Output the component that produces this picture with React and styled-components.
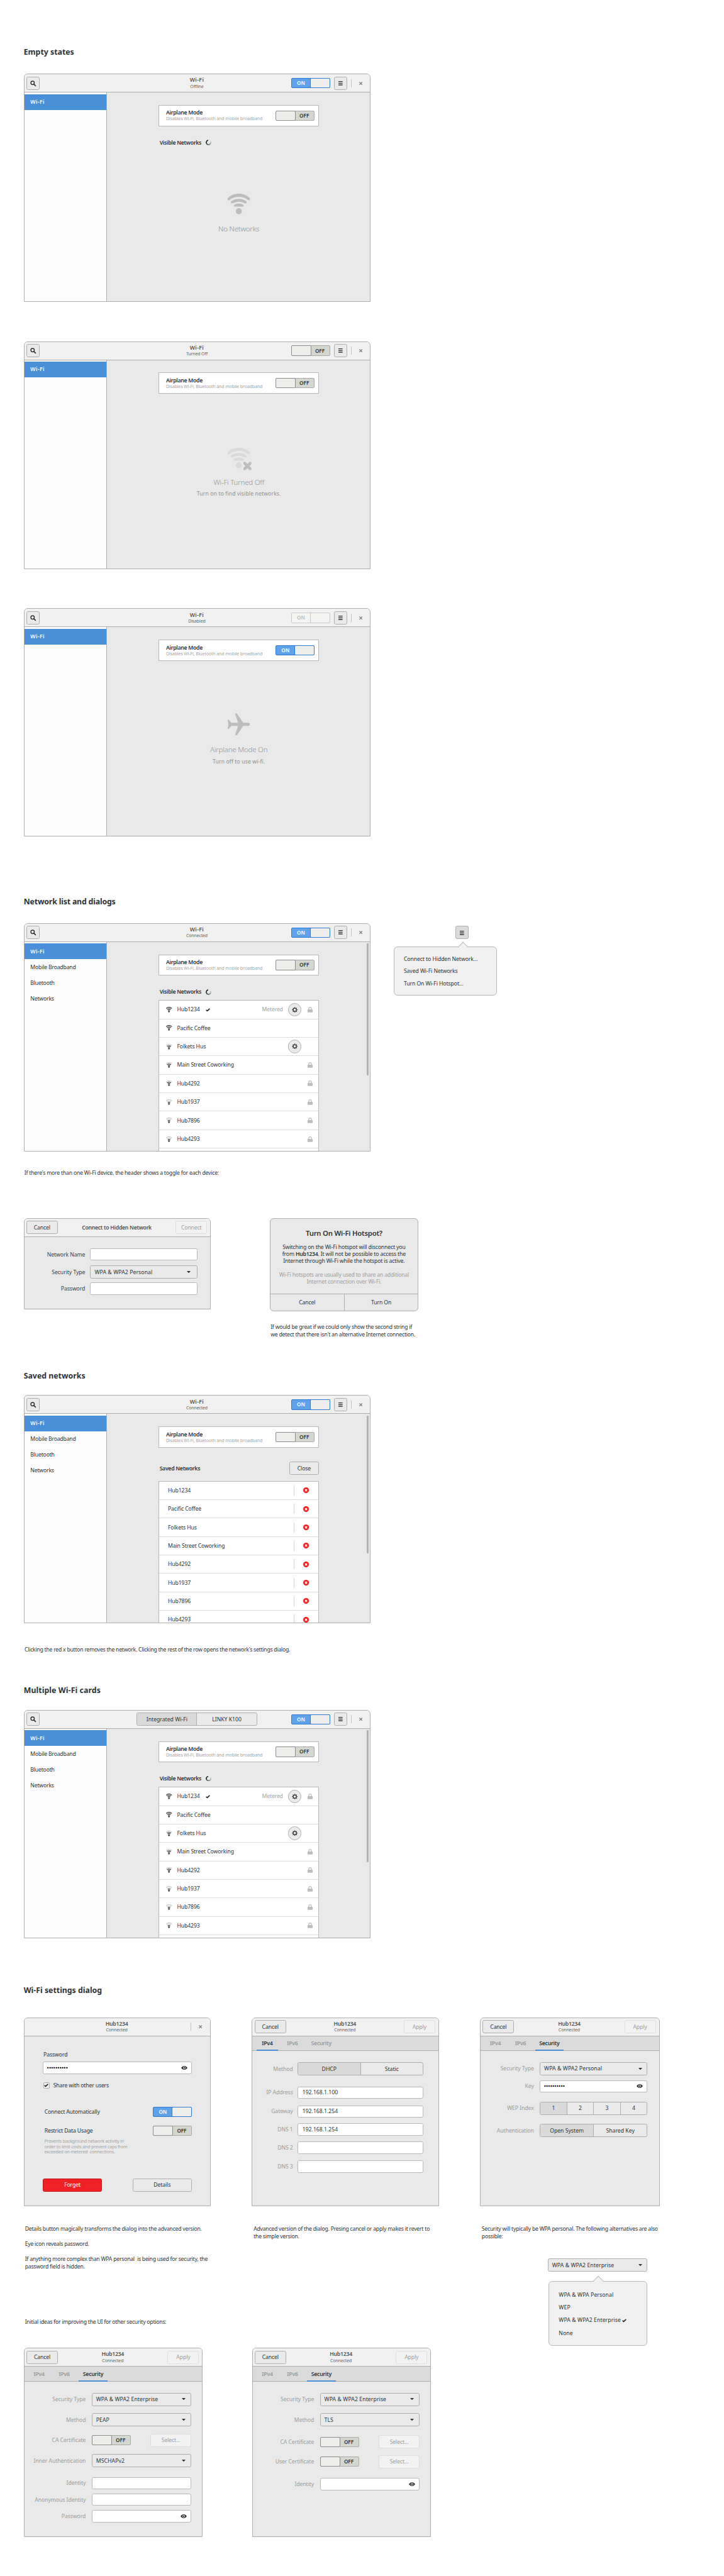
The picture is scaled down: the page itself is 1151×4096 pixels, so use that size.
import React from "react";
import styled, { createGlobalStyle, css } from "styled-components";

/* 1rem = 10 design units */
const GlobalStyle = createGlobalStyle`
  html { font-size: 6.67px; }
  body { margin: 0; background: #fff; }
  *, *::before, *::after { box-sizing: border-box; }
  #root {
    font-family: "Noto Sans", "Open Sans", sans-serif;
    font-size: 1.3rem;
    line-height: 1.8rem;
    color: #2e3436;
    white-space: nowrap;
  }
`;

const line = "#aeaeae";

/* ---------- board ---------- */

const Board = styled.main`
  width: 172.5rem;
  height: 614.1rem;
  max-width: 100vw;
  max-height: 4096px;
  overflow: hidden;
  padding: 11.17rem 0 0 5.65rem;
`;
const Section = styled.section`
  height: ${(p) => p.$height}rem;
`;
const Heading = styled.h2`
  margin: 0;
  font-size: 1.85rem;
  line-height: 2.4rem;
  font-weight: 700;
  letter-spacing: ${(p) => p.$track || 0}em;
`;
const Row = styled.div`
  display: flex;
  align-items: flex-start;
  margin-top: ${(p) => p.$top || 0}rem;
  gap: ${(p) => p.$gap || 0}rem;
`;
const Column = styled.div`
  display: flex;
  flex-direction: column;
  align-items: flex-start;
  flex: none;
  width: ${(p) => p.$width}rem;
`;
const Note = styled.p`
  margin: ${(p) => p.$top || 0}rem 0 0 ${(p) => p.$left || 0.3}rem;
  letter-spacing: ${(p) => p.$track || -0.027}em;
`;

/* ---------- basic controls ---------- */

const Button = styled.button`
  display: flex;
  align-items: center;
  justify-content: center;
  flex: none;
  width: ${(p) => p.$width}rem;
  height: 3.15rem;
  padding: 0;
  border: 1px solid ${line};
  border-radius: 0.4rem;
  background: #eaeaea;
  color: #2e3436;
  font: inherit;
  letter-spacing: -0.015em;
  ${(p) => p.$pressed && css`background: #dbdbdb;`}
  ${(p) => p.$red && css`
    background: #ef2124;
    border-color: #c01518;
    color: #fff;
  `}
  &:disabled {
    background: #f2f2f2;
    border-color: #dedede;
    color: #9c9e9e;
  }
`;
const SwitchBox = styled.div`
  display: flex;
  flex-direction: ${(p) => (p.$on ? "row" : "row-reverse")};
  flex: none;
  width: 9.3rem;
  height: 2.45rem;
  border: 1px solid ${(p) => (p.$muted ? "#c9c9c9" : p.$on ? "#2f7cd0" : "#a9aba6")};
  border-radius: 0.3rem;
  background: ${(p) => (p.$muted ? "#f4f4f3" : p.$on ? "#5ea2ec" : "#d4d7cf")};
  color: ${(p) => (p.$muted ? "#bcbdbc" : p.$on ? "#fff" : "#2e3436")};
`;
const SwitchLabel = styled.span`
  display: flex;
  align-items: center;
  justify-content: center;
  flex: 1;
  font-size: 1.23rem;
  font-weight: 600;
`;
const Slider = styled.span`
  flex: 1;
  margin: -1px;
  border: 1px solid ${(p) => (p.$muted ? "#c9c9c9" : p.$on ? "#2f7cd0" : "#8b8e8b")};
  border-radius: 0.3rem;
  background: ${(p) => (p.$muted ? "#f3f3f1" : "#ededeb")};
`;
const Switch = ({ on, muted }) => (
  <SwitchBox $on={on} $muted={muted}>
    <SwitchLabel>{on ? "ON" : "OFF"}</SwitchLabel>
    <Slider $on={on} $muted={muted} />
  </SwitchBox>
);
const Segments = styled.div`
  display: flex;
  flex: none;
  width: ${(p) => p.$width}rem;
  height: 3.15rem;
  border: 1px solid ${line};
  border-radius: 0.4rem;
  overflow: hidden;
  background: #eaeaea;
`;
const Segment = styled.span`
  display: flex;
  align-items: center;
  justify-content: center;
  flex: 1;
  background: ${(p) => (p.$active ? "#dadada" : "transparent")};
  & + & { border-left: 1px solid ${line}; }
`;
const Toggle = ({ items, width }) => (
  <Segments $width={width}>
    {items.map((t, i) => (
      <Segment key={t} $active={i === 0}>{t}</Segment>
    ))}
  </Segments>
);
const Entry = styled.div`
  display: flex;
  align-items: center;
  justify-content: space-between;
  flex: none;
  width: ${(p) => p.$width}rem;
  height: 2.95rem;
  padding: 0 0.9rem 0 1rem;
  border: 1px solid #b9b9b9;
  border-radius: 0.4rem;
  background: #fff;
`;
const Dots = styled.span`
  font-size: 1.45rem;
  color: #000;
  letter-spacing: -0.03em;
  margin-left: -0.2rem;
`;
const ComboBox = styled(Entry)`
  height: 3.15rem;
  padding: 0 ${(p) => p.$pad || 1.15}rem 0 0.9rem;
  border-color: ${line};
  background: #eaeaea;
  letter-spacing: 0.01em;
`;
const Combo = ({ value, width, pad }) => (
  <ComboBox $width={width} $pad={pad}>
    {value}
    <ArrowIcon viewBox="0 0 9 5"><path d="M0 0H9L4.5 5Z" fill="currentColor" /></ArrowIcon>
  </ComboBox>
);

/* ---------- icons ---------- */

const Icon = styled.svg`
  display: block;
  flex: none;
  width: ${(p) => p.$w}rem;
  height: ${(p) => p.$h || p.$w}rem;
  overflow: visible;
`;
const ArrowIcon = styled(Icon)`
  width: 0.9rem;
  height: 0.5rem;
`;
const SearchIcon = () => (
  <Icon $w={1.4} viewBox="0 0 14 14" fill="none" stroke="currentColor">
    <circle cx="5.7" cy="5.6" r="4.1" strokeWidth="2.2" />
    <path d="M8.8 8.8L12.6 12.6" strokeWidth="2.6" strokeLinecap="round" />
  </Icon>
);
const MenuIcon = () => (
  <Icon $w={1} viewBox="0 0 10 10" stroke="currentColor" strokeWidth="2">
    <path d="M0 1H10M0 5H10M0 9H10" />
  </Icon>
);
const CloseIcon = () => (
  <Icon $w={0.8} viewBox="0 0 8 8" stroke="#7d7f7f" strokeWidth="2">
    <path d="M.7 .7L7.3 7.3M7.3 .7L.7 7.3" />
  </Icon>
);
const CheckIcon = () => (
  <Icon $w={1.05} $h={0.8} viewBox="0 0 21 16" fill="none" stroke="#1f2426" strokeWidth="5">
    <path d="M2 8.5L7.5 13L19 2.5" />
  </Icon>
);
const GearIcon = () => (
  <Icon $w={1.4} viewBox="-7 -7 14 14" fill="none" stroke="#2e3436">
    <circle r="3.8" strokeWidth="1.9" />
    {[0, 45, 90, 135, 180, 225, 270, 315].map((a) => (
      <path key={a} d="M0 -4.3V-6.6" strokeWidth="1.8" transform={`rotate(${a})`} />
    ))}
  </Icon>
);
const LockIcon = () => (
  <Icon $w={1.2} $h={1.3} viewBox="0 0 12 13">
    <path d="M2.9 7V4A3.1 3.1 0 0 1 9.1 4V7" fill="none" stroke="#bdbdbd" strokeWidth="1.9" />
    <rect y="6" width="12" height="7" rx=".8" fill="#bdbdbd" />
  </Icon>
);
const EyeIcon = () => (
  <Icon $w={1.5} $h={0.9} viewBox="0 0 30 18">
    <path d="M0 9C4 3 9 0 15 0S26 3 30 9C26 15 21 18 15 18S4 15 0 9Z" fill="#2e3436" />
    <circle cx="15" cy="9" r="5" fill="none" stroke="#fff" strokeWidth="2.4" />
  </Icon>
);
const RemoveIcon = () => (
  <Icon $w={1.37} viewBox="0 0 14 14">
    <circle cx="7" cy="7" r="7" fill="#ef2124" />
    <path d="M4.6 4.6L9.4 9.4M9.4 4.6L4.6 9.4" stroke="#fff" strokeWidth="2.2" />
  </Icon>
);
const arcs = [
  "M0 15.2V10.6C7 3.6 16 0 26.4 0S45.8 3.6 52.8 10.6V15.2H48.6C42 10 35 7.6 26.4 7.6S10.8 10 4.2 15.2Z",
  "M7.6 22.9V18.6C12.6 14.4 19 12.2 26.4 12.2S40.2 14.4 45.2 18.6V22.9H40.2C36.2 20.4 31.8 19 26.4 19S16.6 20.4 12.6 22.9Z",
  "M14.8 30.7V26.9C18 24.4 22 23.1 26.4 23.1S34.8 24.4 38 26.9V30.7Z",
];
/* level 3 lights every arc, each step down fades the outermost lit arc */
const WifiIcon = ({ size = 1.4, level = 3, color = "#2e3436", faded = "#c6c7c7", off }) => (
  <Icon $w={size} $h={size * 0.93} viewBox="0 0 52.8 49">
    {arcs.map((d, i) => (
      <path key={i} d={d} fill={3 - i <= level ? color : faded} />
    ))}
    <ellipse cx="26.4" cy="41.7" rx="7.2" ry="7.3" fill={color} />
    {off && (
      <path
        d="M37.5 33.5H42.5L47 38.5L51.5 33.5H56.5V38.5L51.8 43.3L56.5 48V53H51.5L47 48.3L42.5 53H37.5V48L42.2 43.3L37.5 38.5Z"
        fill="#bdbdbd"
      />
    )}
  </Icon>
);
const PlaneIcon = () => (
  <Icon $w={5.3} viewBox="0 0 53 53">
    <path
      d="M17.5 1.5C18 0 21.5-.4 22.8 1.8L37 22.8H48.5C54.5 22.8 54.5 30.2 48.5 30.2H37L22.8 51.2C21.5 53.4 18 53 17.5 51.5L25 30.2H8.5L3.5 36.5C2.6 38 .2 38 0 36.8L1.6 26.5L0 16.2C.2 15 2.6 15 3.5 16.5L8.5 22.8H25Z"
      fill="#bdbdbd"
    />
  </Icon>
);
const Spinner = styled.span`
  width: 1.3rem;
  height: 1.3rem;
  border-radius: 50%;
  background: conic-gradient(transparent 50deg, rgba(46, 52, 54, 0.15) 70deg, #2e3436 270deg, #2e3436 360deg, transparent 361deg);
  mask: radial-gradient(circle, transparent 0.37rem, #000 0.4rem);
`;

/* ---------- window chrome ---------- */

const Frame = styled.div`
  display: flex;
  flex-direction: column;
  flex: none;
  width: ${(p) => p.$width || 82.65}rem;
  height: ${(p) => p.$height || 54.4}rem;
  margin-top: ${(p) => p.$top || 0}rem;
  border: 1px solid ${line};
  border-radius: ${(p) => (p.$round ? "0.9rem" : "0.9rem 0.9rem 0 0")};
  background: #e9e9e9;
  overflow: hidden;
`;
const HeaderBar = styled.header`
  display: grid;
  grid-template-columns: 1fr auto 1fr;
  align-items: center;
  flex: none;
  height: calc(4.5rem - 1px);
  padding: 0 0.65rem 0 0.55rem;
  border-bottom: 1px solid ${line};
  background: #f1f1f1;
`;
const Titles = styled.div`
  display: flex;
  flex-direction: column;
  align-items: center;
  padding-top: 0.15rem;
  line-height: 1.55rem;
  color: #505354;
`;
const Title = styled.strong`
  font-weight: 600;
  letter-spacing: ${(p) => p.$track || 0}em;
`;
const Subtitle = styled.span`
  font-size: 1.05rem;
  letter-spacing: -0.02em;
  color: #66696a;
`;
const HeaderEnd = styled.div`
  display: flex;
  align-items: center;
  justify-content: flex-end;
`;
const Separator = styled.span`
  width: 1px;
  height: 2rem;
  background: #c0c0c0;
`;
const MenuSlot = styled.div`
  margin: 0 0.86rem 0 1rem;
`;
const CloseSlot = styled.div`
  padding: 0 1.15rem 0 1.75rem;
`;
const WindowBody = styled.div`
  display: flex;
  flex: 1;
  min-height: 0;
`;
const Sidebar = styled.nav`
  flex: none;
  width: calc(19.85rem - 1px);
  padding-top: 0.35rem;
  border-right: 1px solid ${line};
  background: #fbfbfb;
`;
const SidebarItem = styled.div`
  display: flex;
  align-items: center;
  height: 3.75rem;
  padding-left: 1.45rem;
  letter-spacing: -0.022em;
  ${(p) => p.$selected && css`
    background: #4a90d9;
    color: #fff;
    font-weight: 600;
    letter-spacing: 0.045em;
  `}
`;
const Content = styled.div`
  flex: none;
  width: 38.2rem;
  margin-left: 12.33rem;
  padding-top: 2.98rem;
`;
const Scroll = styled.span`
  width: 0.45rem;
  height: ${(p) => p.$height}rem;
  margin: 0.4rem 0.3rem 0 auto;
  border-radius: 0.2rem;
  background: #b1b1b1;
`;
const Card = styled.div`
  display: flex;
  align-items: center;
  justify-content: space-between;
  height: 5.04rem;
  padding: 0 0.95rem 0 1.6rem;
  border: 1px solid #b9b9b9;
  background: #fff;
`;
const CardText = styled.div`
  display: flex;
  flex-direction: column;
  line-height: 1.5rem;
  padding-top: 0.15rem;
`;
const Strong = styled.strong`
  font-weight: 600;
  letter-spacing: -0.032em;
`;
const Dim = styled.span`
  font-size: 1.05rem;
  letter-spacing: -0.017em;
  color: #a3a5a5;
`;
const ListHeader = styled.div`
  display: flex;
  align-items: center;
  gap: 1.1rem;
  height: ${(p) => (p.$tall ? 3.15 : 1.8)}rem;
  margin: ${(p) => (p.$tall ? "3.39rem 0 1.38rem" : "3rem 0 1.06rem")};
  padding-left: 0.2rem;
  ${(p) => p.$tall && css`justify-content: space-between;`}
`;
const List = styled.div`
  border: 1px solid #b9b9b9;
  border-bottom: 0;
  background: #fff;
`;
const ListRow = styled.div`
  display: flex;
  align-items: center;
  height: 4.4rem;
  padding: 0 1.4rem 0 ${(p) => (p.$saved ? 2.05 : 1.6)}rem;
  border-bottom: 1px solid #dededb;
  letter-spacing: -0.012em;
`;
const NetworkName = styled.span`
  padding: 0 1.35rem 0 ${(p) => (p.$saved ? 0 : 1.22)}rem;
`;
const RowEnd = styled.div`
  display: flex;
  align-items: center;
  margin-left: auto;
`;
const Metered = styled.span`
  margin-right: 1.2rem;
  color: #a3a5a5;
  letter-spacing: -0.02em;
`;
const GearButton = styled(Button)`
  width: 3.2rem;
  height: 3.2rem;
  border-radius: 50%;
`;
const LockSlot = styled.div`
  width: 1.2rem;
  margin-left: 1.45rem;
`;
const RemoveSlot = styled.div`
  display: flex;
  align-items: center;
  gap: 2.1rem;
  margin: 0 0.8rem 0 auto;
`;
const RowDivider = styled.span`
  width: 1px;
  height: 2.4rem;
  background: #d3d3d3;
`;

const SettingsWindow = ({ top, status, on, muted, devices, pages, airplane, scroll, children }) => (
  <Frame $top={top}>
    <HeaderBar>
      <div><Button $width={3.15}><SearchIcon /></Button></div>
      {devices ? (
        <Toggle items={devices} width={28.7} />
      ) : (
        <Titles><Title $track={0.045}>Wi-Fi</Title><Subtitle>{status}</Subtitle></Titles>
      )}
      <HeaderEnd>
        <Switch on={on} muted={muted} />
        <MenuSlot><Button $width={3.15}><MenuIcon /></Button></MenuSlot>
        <Separator />
        <CloseSlot><CloseIcon /></CloseSlot>
      </HeaderEnd>
    </HeaderBar>
    <WindowBody>
      <Sidebar>
        <SidebarItem $selected>Wi-Fi</SidebarItem>
        {pages && pages.map((p) => <SidebarItem key={p}>{p}</SidebarItem>)}
      </Sidebar>
      <Content>
        <Card>
          <CardText>
            <Strong>Airplane Mode</Strong>
            <Dim>Disables Wi-Fi, Bluetooth and mobile broadband</Dim>
          </CardText>
          <Switch on={airplane} />
        </Card>
        {children}
      </Content>
      {scroll && <Scroll $height={scroll} />}
    </WindowBody>
  </Frame>
);

const VisibleHeader = () => (
  <ListHeader><Strong>Visible Networks</Strong><Spinner /></ListHeader>
);

const Empty = styled.div`
  display: flex;
  flex-direction: column;
  align-items: center;
  padding-top: ${(p) => p.$top}rem;
`;
const EmptyIcon = styled.div`
  height: 5.3rem;
`;
const EmptyTitle = styled.div`
  margin: ${(p) => p.$top || 1.8}rem 0 0.68rem;
  font-size: 1.72rem;
  line-height: 2.4rem;
  font-weight: 300;
  letter-spacing: -0.018em;
  color: #919494;
`;
const EmptyHint = styled.div`
  color: #8f9292;
  letter-spacing: 0.012em;
`;

const pages = ["Mobile Broadband", "Bluetooth", "Networks"];
const networks = [
  { name: "Hub1234", level: 3, current: true, gear: true, lock: true },
  { name: "Pacific Coffee", level: 3 },
  { name: "Folkets Hus", level: 2, gear: true },
  { name: "Main Street Coworking", level: 2, lock: true },
  { name: "Hub4292", level: 2, lock: true },
  { name: "Hub1937", level: 1, lock: true },
  { name: "Hub7896", level: 1, lock: true },
  { name: "Hub4293", level: 1, lock: true },
];

const NetworkList = () => (
  <List>
    {networks.map((n) => (
      <ListRow key={n.name}>
        <WifiIcon level={n.level} />
        <NetworkName>{n.name}</NetworkName>
        {n.current && <CheckIcon />}
        <RowEnd>
          {n.current && <Metered>Metered</Metered>}
          {n.gear && <GearButton><GearIcon /></GearButton>}
          <LockSlot>{n.lock && <LockIcon />}</LockSlot>
        </RowEnd>
      </ListRow>
    ))}
    <ListRow />
  </List>
);
const SavedList = () => (
  <List>
    {networks.map((n) => (
      <ListRow key={n.name} $saved>
        <NetworkName $saved>{n.name}</NetworkName>
        <RemoveSlot><RowDivider /><RemoveIcon /></RemoveSlot>
      </ListRow>
    ))}
  </List>
);

/* ---------- popovers ---------- */

const MenuAnchor = styled.div`
  margin: 0.7rem 0 0 14.8rem;
`;
const Popover = styled.div`
  position: relative;
  width: ${(p) => p.$width}rem;
  height: ${(p) => p.$height}rem;
  margin-top: ${(p) => p.$top}rem;
  padding: ${(p) => p.$pad}rem 0 0 2.3rem;
  border: 1px solid #b9b9b9;
  border-radius: 0.9rem;
  background: #f1f1f1;
  letter-spacing: ${(p) => p.$track}em;
  &::before {
    content: "";
    position: absolute;
    top: -0.95rem;
    left: calc(${(p) => p.$arrow}rem - 0.92rem);
    width: 1.84rem;
    height: 1.84rem;
    border: solid #b9b9b9;
    border-width: 1px 0 0 1px;
    background: linear-gradient(135deg, #f1f1f1 50%, transparent 50%);
    transform: rotate(45deg);
  }
`;
const PopoverItem = styled.div`
  display: flex;
  align-items: center;
  gap: 0.25rem;
  height: ${(p) => p.$height}rem;
`;

/* ---------- dialogs ---------- */

const DialogHeader = styled(HeaderBar)`
  padding: 0 0.75rem 0 0.5rem;
`;
const TabBar = styled.div`
  display: flex;
  flex: none;
  height: 3.5rem;
  padding-left: 0.97rem;
  border-bottom: 1px solid ${line};
  background: #dbdbdb;
`;
const Tab = styled.span`
  display: flex;
  align-items: center;
  justify-content: center;
  width: ${(p) => p.$width}rem;
  margin-right: 0.9rem;
  margin-bottom: -1px;
  border-top: 0.3rem solid transparent;
  border-bottom: 0.3rem solid ${(p) => (p.$active ? "#4a90d9" : "transparent")};
  font-weight: 600;
  letter-spacing: -0.025em;
  color: ${(p) => (p.$active ? "#2e3436" : "#989a9a")};
`;
const Tabs = ({ active }) => (
  <TabBar>
    {[["IPv4", 5.1], ["IPv6", 5.1], ["Security", 6.85]].map(([t, w]) => (
      <Tab key={t} $width={w} $active={t === active}>{t}</Tab>
    ))}
  </TabBar>
);
const FieldRow = styled.div`
  display: flex;
  align-items: center;
  height: ${(p) => p.$height || 3.15}rem;
  margin-top: ${(p) => p.$top}rem;
`;
const FieldLabel = styled.span`
  flex: none;
  width: ${(p) => p.$width}rem;
  padding-right: ${(p) => p.$gap}rem;
  text-align: right;
  letter-spacing: -0.008em;
  color: ${(p) => (p.$dark ? "#3c4143" : "#9a9d9d")};
`;
const Field = ({ label, width, gap = 1.4, dark, top, height, children }) => (
  <FieldRow $top={top} $height={height}>
    <FieldLabel $width={width} $gap={gap} $dark={dark}>{label}</FieldLabel>
    {children}
  </FieldRow>
);
const HubTitles = () => (
  <Titles><Title $track={-0.028}>Hub1234</Title><Subtitle>Connected</Subtitle></Titles>
);
const AdvancedDialog = ({ width, tab, children }) => (
  <Frame $width={width} $height={45.05}>
    <DialogHeader>
      <div><Button $width={7.5}>Cancel</Button></div>
      <HubTitles />
      <HeaderEnd><Button $width={7.5} disabled>Apply</Button></HeaderEnd>
    </DialogHeader>
    <Tabs active={tab} />
    {children}
  </Frame>
);
const SelectButton = styled(Button)`
  width: 9.7rem;
  margin-left: 4.75rem;
`;

const AlertBody = styled.div`
  display: flex;
  flex-direction: column;
  align-items: center;
  flex: 1;
  text-align: center;
  line-height: 1.635rem;
  letter-spacing: -0.017em;
`;
const AlertTitle = styled.strong`
  margin: 2.3rem 0 1.4rem;
  font-size: 1.7rem;
  line-height: 2.4rem;
  font-weight: 600;
  letter-spacing: -0.02em;
`;
const AlertText = styled.div``;
const AlertHint = styled.div`
  margin-top: 1.65rem;
  letter-spacing: -0.023em;
  color: #a0a2a2;
`;
const AlertActions = styled.div`
  display: grid;
  grid-template-columns: 1fr 1fr;
  height: 4.05rem;
  border-top: 1px solid ${line};
`;
const AlertAction = styled.span`
  display: flex;
  align-items: center;
  justify-content: center;
  letter-spacing: -0.015em;
  & + & { border-left: 1px solid ${line}; }
`;

const SimpleForm = styled.div`
  display: flex;
  flex-direction: column;
  padding: 3.55rem 4.4rem 0;
`;
const PlainLabel = styled.span`
  padding-left: 0.15rem;
  letter-spacing: -0.008em;
`;
const CheckRow = styled.div`
  display: flex;
  align-items: center;
  gap: 0.9rem;
  height: 1.8rem;
  margin: 1.85rem 0 4.15rem 0.15rem;
  letter-spacing: -0.018em;
`;
const CheckBox = styled.span`
  display: flex;
  align-items: center;
  justify-content: center;
  width: 1.45rem;
  height: 1.4rem;
  border: 1px solid #b0b0b0;
  border-radius: 0.3rem;
  background: #f0f0f0;
`;
const SwitchRow = styled.div`
  display: flex;
  align-items: center;
  justify-content: space-between;
  height: 2.45rem;
  margin-bottom: ${(p) => p.$bottom || 0}rem;
  padding-left: 0.4rem;
  letter-spacing: -0.018em;
`;
const Hint = styled(Dim)`
  padding-left: 0.4rem;
  margin-top: 0.75rem;
  line-height: 1.31rem;
  letter-spacing: -0.02em;
`;
const ButtonRow = styled.div`
  display: flex;
  justify-content: space-between;
  margin-top: 5.5rem;
`;

const Picker = styled.div`
  margin: 4.4rem 0 0 16.14rem;
`;
const PickerMenu = styled(Popover)`
  margin-left: 0.2rem;
`;
const SecurityPicker = () => (
  <Picker>
    <Combo value="WPA & WPA2 Enterprise" width={23.8} />
    <PickerMenu $width={23.5} $height={15.45} $top={2.2} $pad={1.7} $arrow={11.65} $track={0.01}>
      <PopoverItem $height={3.02}>WPA & WPA Personal</PopoverItem>
      <PopoverItem $height={3.02}>WEP</PopoverItem>
      <PopoverItem $height={3.02}>WPA & WPA2 Enterprise<CheckIcon /></PopoverItem>
      <PopoverItem $height={3.02}>None</PopoverItem>
    </PickerMenu>
  </Picker>
);

export default function App() {
  return (
    <>
      <GlobalStyle />
      <Board>
        <Section $height={202.65}>
          <Heading>Empty states</Heading>
          <SettingsWindow top={4} status="Offline" on>
            <VisibleHeader />
            <Empty $top={10.22}>
              <EmptyIcon><WifiIcon size={5.28} color="#bdbdbd" /></EmptyIcon>
              <EmptyTitle $top={1.85}>No Networks</EmptyTitle>
            </Empty>
          </SettingsWindow>
          <SettingsWindow top={9.38} status="Turned Off">
            <Empty $top={12.81}>
              <EmptyIcon><WifiIcon size={5.28} color="#dadada" off /></EmptyIcon>
              <EmptyTitle>Wi-Fi Turned Off</EmptyTitle>
              <EmptyHint>Turn on to find visible networks.</EmptyHint>
            </Empty>
          </SettingsWindow>
          <SettingsWindow top={9.3} status="Disabled" on muted airplane>
            <Empty $top={12.5}>
              <EmptyIcon><PlaneIcon /></EmptyIcon>
              <EmptyTitle $top={2.2}>Airplane Mode On</EmptyTitle>
              <EmptyHint>Turn off to use wi-fi.</EmptyHint>
            </Empty>
          </SettingsWindow>
        </Section>

        <Section $height={113}>
          <Heading $track={-0.014}>Network list and dialogs</Heading>
          <Row $top={3.83} $gap={5.5}>
            <SettingsWindow status="Connected" on pages={pages} scroll={31.4}>
              <VisibleHeader />
              <NetworkList />
            </SettingsWindow>
            <Column $width={24.6}>
              <MenuAnchor><Button $width={3.15} $pressed><MenuIcon /></Button></MenuAnchor>
              <Popover $width={24.6} $height={11.65} $top={1.8} $pad={1.35} $arrow={16.35} $track={-0.01}>
                <PopoverItem $height={2.9}>Connect to Hidden Network...</PopoverItem>
                <PopoverItem $height={2.9}>Saved Wi-Fi Networks</PopoverItem>
                <PopoverItem $height={2.9}>Turn On Wi-Fi Hotspot...</PopoverItem>
              </Popover>
            </Column>
          </Row>
          <Note $top={4.19} $left={0.15} $track={-0.024}>
            If there's more than one Wi-Fi device, the header shows a toggle for each device:
          </Note>
          <Row $top={9.93} $gap={14}>
            <Frame $width={44.6} $height={21.8}>
              <DialogHeader>
                <div><Button $width={7.45}>Cancel</Button></div>
                <Titles><Strong>Connect to Hidden Network</Strong></Titles>
                <HeaderEnd><Button $width={7.45} disabled>Connect</Button></HeaderEnd>
              </DialogHeader>
              <Field label="Network Name" width={15.7} gap={1.2} dark top={2.7} height={2.95}>
                <Entry $width={25.65} />
              </Field>
              <Field label="Security Type" width={15.7} gap={1.2} dark top={1.15}>
                <Combo value="WPA & WPA2 Personal" width={25.65} pad={1.6} />
              </Field>
              <Field label="Password" width={15.7} gap={1.2} dark top={0.95} height={2.95}>
                <Entry $width={25.65} />
              </Field>
            </Frame>
            <Column $width={35.5}>
              <Frame $width={35.5} $height={22.3} $round>
                <AlertBody>
                  <AlertTitle>Turn On Wi-Fi Hotspot?</AlertTitle>
                  <AlertText>
                    Switching on the Wi-Fi hotspot will disconnect you<br />
                    from <Strong>Hub1234</Strong>. It will not be possible to access the<br />
                    Internet through Wi-Fi while the hotspot is active.
                  </AlertText>
                  <AlertHint>
                    Wi-Fi hotspots are usually used to share an additional<br />
                    Internet connection over Wi-Fi.
                  </AlertHint>
                </AlertBody>
                <AlertActions>
                  <AlertAction>Cancel</AlertAction>
                  <AlertAction>Turn On</AlertAction>
                </AlertActions>
              </Frame>
              <Note $top={2.8} $left={0.25}>
                If would be great if we could only show the second string if<br />
                we detect that there isn't an alternative Internet connection.
              </Note>
            </Column>
          </Row>
        </Section>

        <Section $height={75}>
          <Heading>Saved networks</Heading>
          <SettingsWindow top={3.37} status="Connected" on pages={pages} scroll={32.9}>
            <ListHeader $tall>
              <Strong>Saved Networks</Strong>
              <Button $width={7.1}>Close</Button>
            </ListHeader>
            <SavedList />
          </SettingsWindow>
          <Note $top={5.31} $left={0.2} $track={-0.029}>
            Clicking the red x button removes the network. Clicking the rest of the row opens the network's settings dialog.
          </Note>
        </Section>

        <Section $height={71.45}>
          <Heading $track={0.007}>Multiple Wi-Fi cards</Heading>
          <SettingsWindow
            top={3.38}
            devices={["Integrated Wi-Fi", "LINKY K100"]}
            on
            pages={pages}
            scroll={31.4}
          >
            <VisibleHeader />
            <NetworkList />
          </SettingsWindow>
        </Section>

        <Section $height={140}>
          <Heading>Wi-Fi settings dialog</Heading>
          <Row $top={5.23} $gap={9.78}>
            <Column $width={44.6}>
              <Frame $width={44.6} $height={45.05}>
                <DialogHeader>
                  <span />
                  <HubTitles />
                  <HeaderEnd><Separator /><CloseSlot><CloseIcon /></CloseSlot></HeaderEnd>
                </DialogHeader>
                <SimpleForm>
                  <PlainLabel>Password</PlainLabel>
                  <Row $top={0.7}>
                    <Entry $width={35.6}><Dots>••••••••••</Dots><EyeIcon /></Entry>
                  </Row>
                  <CheckRow>
                    <CheckBox><CheckIcon /></CheckBox>
                    Share with other users
                  </CheckRow>
                  <SwitchRow $bottom={2.05}>Connect Automatically<Switch on /></SwitchRow>
                  <SwitchRow>Restrict Data Usage<Switch /></SwitchRow>
                  <Hint>
                    Prevents background network activity in<br />
                    order to limit costs and prevent caps from<br />
                    exceeded on metered&nbsp; connections.
                  </Hint>
                  <ButtonRow>
                    <Button $width={14.1} $red>Forget</Button>
                    <Button $width={14.1}>Details</Button>
                  </ButtonRow>
                </SimpleForm>
              </Frame>
              <Note $top={4.45}>Details button magically transforms the dialog into the advanced version.</Note>
              <Note $top={1.8}>Eye icon reveals password.</Note>
              <Note $top={1.8}>
                If anything more complex than WPA personal&nbsp; is being used for security, the<br />
                password field is hidden.
              </Note>
              <Note $top={11.39}>Initial ideas for improving the UI for other security options:</Note>
            </Column>

            <Column $width={44.6}>
              <AdvancedDialog width={44.6} tab="IPv4">
                <Field label="Method" width={10.75} gap={1.1} top={2.75}>
                  <Toggle items={["DHCP", "Static"]} width={30} />
                </Field>
                <Field label="IP Address" width={10.75} gap={1.1} top={2.6} height={2.95}>
                  <Entry $width={30}>192.168.1.100</Entry>
                </Field>
                <Field label="Gateway" width={10.75} gap={1.1} top={1.55} height={2.95}>
                  <Entry $width={30}>192.168.1.254</Entry>
                </Field>
                <Field label="DNS 1" width={10.75} gap={1.1} top={1.35} height={2.95}>
                  <Entry $width={30}>192.168.1.254</Entry>
                </Field>
                <Field label="DNS 2" width={10.75} gap={1.1} top={1.37} height={2.95}>
                  <Entry $width={30} />
                </Field>
                <Field label="DNS 3" width={10.75} gap={1.1} top={1.53} height={2.95}>
                  <Entry $width={30} />
                </Field>
              </AdvancedDialog>
              <Note $top={4.45} $left={0.42}>
                Advanced version of the dialog. Presing cancel or apply makes it revert to<br />
                the simple version.
              </Note>
            </Column>

            <Column $width={42.8}>
              <AdvancedDialog width={42.8} tab="Security">
                <Field label="Security Type" width={14.1} top={2.7}>
                  <Combo value="WPA & WPA2 Personal" width={25.65} />
                </Field>
                <Field label="Key" width={14.1} top={1.15} height={2.95}>
                  <Entry $width={25.65}><Dots>••••••••••</Dots><EyeIcon /></Entry>
                </Field>
                <Field label="WEP Index" width={14.1} top={2.15}>
                  <Toggle items={["1", "2", "3", "4"]} width={25.65} />
                </Field>
                <Field label="Authentication" width={14.1} top={2.2}>
                  <Toggle items={["Open System", "Shared Key"]} width={25.65} />
                </Field>
              </AdvancedDialog>
              <Note $top={4.45} $left={0.42}>
                Security will typically be WPA personal. The following alternatives are also<br />
                possible:
              </Note>
              <SecurityPicker />
            </Column>
          </Row>

          <Row $top={0.53} $gap={11.7}>
            <AdvancedDialog width={42.7} tab="Security">
              <Field label="Security Type" width={16.05} top={2.7}>
                <Combo value="WPA & WPA2 Enterprise" width={23.75} />
              </Field>
              <Field label="Method" width={16.05} top={1.75}>
                <Combo value="PEAP" width={23.75} />
              </Field>
              <Field label="CA Certificate" width={16.05} top={1.72}>
                <Switch /><SelectButton disabled>Select...</SelectButton>
              </Field>
              <Field label="Inner Authentication" width={16.05} top={1.72}>
                <Combo value="MSCHAPv2" width={23.75} />
              </Field>
              <Field label="Identity" width={16.05} top={2.3} height={2.95}>
                <Entry $width={23.75} />
              </Field>
              <Field label="Anonymous Identity" width={16.05} top={0.98} height={2.95}>
                <Entry $width={23.75} />
              </Field>
              <Field label="Password" width={16.05} top={0.98} height={2.95}>
                <Entry $width={23.75}><span /><EyeIcon /></Entry>
              </Field>
            </AdvancedDialog>
            <AdvancedDialog width={42.7} tab="Security">
              <Field label="Security Type" width={16.05} top={2.7}>
                <Combo value="WPA & WPA2 Enterprise" width={23.75} />
              </Field>
              <Field label="Method" width={16.05} top={1.75}>
                <Combo value="TLS" width={23.75} />
              </Field>
              <Field label="CA Certificate" width={16.05} top={2.1}>
                <Switch /><SelectButton disabled>Select...</SelectButton>
              </Field>
              <Field label="User Certificate" width={16.05} top={1.55}>
                <Switch /><SelectButton disabled>Select...</SelectButton>
              </Field>
              <Field label="Identity" width={16.05} top={2.35} height={2.95}>
                <Entry $width={23.75}><span /><EyeIcon /></Entry>
              </Field>
            </AdvancedDialog>
          </Row>
        </Section>
      </Board>
    </>
  );
}
